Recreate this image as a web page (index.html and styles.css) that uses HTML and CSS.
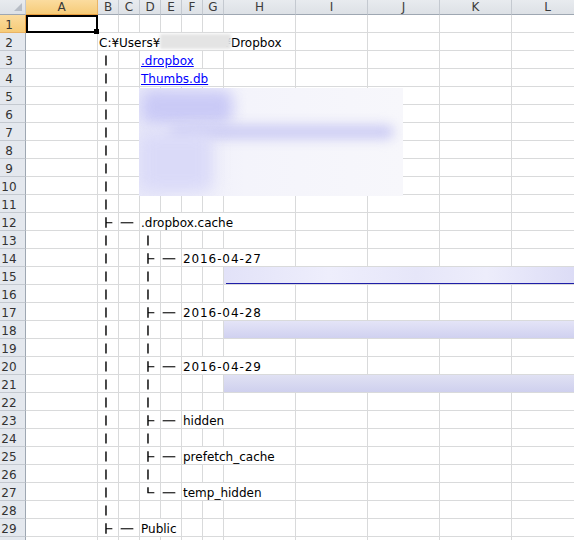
FILE: index.html
```html
<!DOCTYPE html>
<html lang="ja">
<head>
<meta charset="utf-8">
<title>Dropbox folder tree</title>
<link rel="stylesheet" href="styles.css">
</head>
<body>
<div class="sheet">
  <div class="hdr">
    <div class="corner"></div>
    <div class="sel">A</div><div>B</div><div>C</div><div>D</div><div>E</div><div>F</div><div>G</div><div>H</div><div>I</div><div>J</div><div>K</div><div>L</div>
  </div>

  <div class="row"><div class="rh sel">1</div><div></div><div></div><div></div><div></div><div></div><div></div><div></div><div></div><div></div><div></div><div></div><div></div></div>
  <div class="row"><div class="rh">2</div><div></div><div class="s7">C:¥Users¥<span class="redact"></span>¥Dropbox</div><div></div><div></div><div></div><div></div></div>
  <div class="row"><div class="rh">3</div><div></div><div class="t"><span>│</span></div><div></div><div class="s3"><a class="link" href="#">.dropbox</a></div><div></div><div></div><div></div><div></div><div></div><div></div></div>
  <div class="row"><div class="rh">4</div><div></div><div class="t"><span>│</span></div><div></div><div class="s4"><a class="link" href="#">Thumbs.db</a></div><div></div><div></div><div></div><div></div><div></div></div>
  <div class="row"><div class="rh">5</div><div></div><div class="t"><span>│</span></div><div></div><div></div><div></div><div></div><div></div><div></div><div></div><div></div><div></div><div></div></div>
  <div class="row"><div class="rh">6</div><div></div><div class="t"><span>│</span></div><div></div><div></div><div></div><div></div><div></div><div></div><div></div><div></div><div></div><div></div></div>
  <div class="row"><div class="rh">7</div><div></div><div class="t"><span>│</span></div><div></div><div></div><div></div><div></div><div></div><div></div><div></div><div></div><div></div><div></div></div>
  <div class="row"><div class="rh">8</div><div></div><div class="t"><span>│</span></div><div></div><div></div><div></div><div></div><div></div><div></div><div></div><div></div><div></div><div></div></div>
  <div class="row"><div class="rh">9</div><div></div><div class="t"><span>│</span></div><div></div><div></div><div></div><div></div><div></div><div></div><div></div><div></div><div></div><div></div></div>
  <div class="row"><div class="rh">10</div><div></div><div class="t"><span>│</span></div><div></div><div></div><div></div><div></div><div></div><div></div><div></div><div></div><div></div><div></div></div>
  <div class="row"><div class="rh">11</div><div></div><div class="t"><span>│</span></div><div></div><div></div><div></div><div></div><div></div><div></div><div></div><div></div><div></div><div></div></div>
  <div class="row"><div class="rh">12</div><div></div><div class="t"><span>├</span></div><div class="t"><span>─</span></div><div class="s5">.dropbox.cache</div><div></div><div></div><div></div><div></div></div>
  <div class="row"><div class="rh">13</div><div></div><div class="t"><span>│</span></div><div></div><div class="t"><span>│</span></div><div></div><div></div><div></div><div></div><div></div><div></div><div></div><div></div></div>
  <div class="row"><div class="rh">14</div><div></div><div class="t"><span>│</span></div><div></div><div class="t"><span>├</span></div><div class="t"><span>─</span></div><div class="s3 date">2016-04-27</div><div></div><div></div><div></div><div></div></div>
  <div class="row"><div class="rh">15</div><div></div><div class="t"><span>│</span></div><div></div><div class="t"><span>│</span></div><div></div><div></div><div></div><div></div><div></div><div></div><div></div><div></div></div>
  <div class="row"><div class="rh">16</div><div></div><div class="t"><span>│</span></div><div></div><div class="t"><span>│</span></div><div></div><div></div><div></div><div></div><div></div><div></div><div></div><div></div></div>
  <div class="row"><div class="rh">17</div><div></div><div class="t"><span>│</span></div><div></div><div class="t"><span>├</span></div><div class="t"><span>─</span></div><div class="s3 date">2016-04-28</div><div></div><div></div><div></div><div></div></div>
  <div class="row"><div class="rh">18</div><div></div><div class="t"><span>│</span></div><div></div><div class="t"><span>│</span></div><div></div><div></div><div></div><div></div><div></div><div></div><div></div><div></div></div>
  <div class="row"><div class="rh">19</div><div></div><div class="t"><span>│</span></div><div></div><div class="t"><span>│</span></div><div></div><div></div><div></div><div></div><div></div><div></div><div></div><div></div></div>
  <div class="row"><div class="rh">20</div><div></div><div class="t"><span>│</span></div><div></div><div class="t"><span>├</span></div><div class="t"><span>─</span></div><div class="s3 date">2016-04-29</div><div></div><div></div><div></div><div></div></div>
  <div class="row"><div class="rh">21</div><div></div><div class="t"><span>│</span></div><div></div><div class="t"><span>│</span></div><div></div><div></div><div></div><div></div><div></div><div></div><div></div><div></div></div>
  <div class="row"><div class="rh">22</div><div></div><div class="t"><span>│</span></div><div></div><div class="t"><span>│</span></div><div></div><div></div><div></div><div></div><div></div><div></div><div></div><div></div></div>
  <div class="row"><div class="rh">23</div><div></div><div class="t"><span>│</span></div><div></div><div class="t"><span>├</span></div><div class="t"><span>─</span></div><div class="s3">hidden</div><div></div><div></div><div></div><div></div></div>
  <div class="row"><div class="rh">24</div><div></div><div class="t"><span>│</span></div><div></div><div class="t"><span>│</span></div><div></div><div></div><div></div><div></div><div></div><div></div><div></div><div></div></div>
  <div class="row"><div class="rh">25</div><div></div><div class="t"><span>│</span></div><div></div><div class="t"><span>├</span></div><div class="t"><span>─</span></div><div class="s3">prefetch_cache</div><div></div><div></div><div></div><div></div></div>
  <div class="row"><div class="rh">26</div><div></div><div class="t"><span>│</span></div><div></div><div class="t"><span>│</span></div><div></div><div></div><div></div><div></div><div></div><div></div><div></div><div></div></div>
  <div class="row"><div class="rh">27</div><div></div><div class="t"><span>│</span></div><div></div><div class="t"><span>└</span></div><div class="t"><span>─</span></div><div class="s3">temp_hidden</div><div></div><div></div><div></div><div></div></div>
  <div class="row"><div class="rh">28</div><div></div><div class="t"><span>│</span></div><div></div><div></div><div></div><div></div><div></div><div></div><div></div><div></div><div></div><div></div></div>
  <div class="row"><div class="rh">29</div><div></div><div class="t"><span>├</span></div><div class="t"><span>─</span></div><div class="s2">Public</div><div></div><div></div><div></div><div></div><div></div><div></div><div></div></div>
  <div class="row"><div class="rh"></div><div></div><div></div><div></div><div></div><div></div><div></div><div></div><div></div><div></div><div></div><div></div><div></div></div>

  <div class="redblock">
    <div class="blob b1"></div>
    <div class="blob b2"></div>
    <div class="blob b3"></div>
  </div>
  <div class="bar bar1"><div class="uline"></div></div>
  <div class="bar bar2"></div>
  <div class="bar bar3"></div>

  <div class="selection"></div>
  <div class="handle"></div>
</div>
</body>
</html>
```

FILE: styles.css
```css
:root {
  --cols: 26px 72px repeat(6, 21px) repeat(5, 72px);
  --grid: #d9dadb;
  --hdr-line: #c4c9d0;
  --hdr-edge: #9ea7b2;
}

* { box-sizing: border-box; }

html, body {
  margin: 0;
  padding: 0;
  background: #fff;
}

body {
  width: 574px;
  height: 540px;
  overflow: hidden;
}

.sheet {
  position: relative;
  width: 574px;
  height: 540px;
  overflow: hidden;
  font-family: "DejaVu Sans", sans-serif;
  font-size: 12px;
  color: #000;
}

.hdr, .row {
  display: grid;
  grid-template-columns: var(--cols);
  width: 584px;
}

.hdr { height: 15px; }

.hdr > div {
  height: 15px;
  line-height: 14px;
  text-align: center;
  color: #3b3b3b;
  background: linear-gradient(#e8ebef, #dde1e6);
  border-right: 1px solid var(--hdr-line);
  border-bottom: 1px solid var(--hdr-edge);
}

.hdr > .sel {
  background: linear-gradient(#fbdc9f, #f6cb78);
  border-right-color: #eab465;
  border-bottom-color: #e99f3f;
}

.corner { position: relative; }

.corner::after {
  content: "";
  position: absolute;
  right: 3px;
  bottom: 3px;
  width: 8px;
  height: 8px;
  background: #b7bdc6;
  clip-path: polygon(100% 0, 100% 100%, 0 100%);
}

.row { height: 18px; }

.row > div {
  height: 18px;
  border-right: 1px solid var(--grid);
  border-bottom: 1px solid var(--grid);
  padding: 4px 0 0 1px;
  line-height: 13px;
  white-space: nowrap;
}

.row > .rh {
  background: #e4e8ee;
  border-right-color: var(--hdr-edge);
  border-bottom-color: var(--hdr-line);
  text-align: center;
  padding-right: 8px;
  color: #333;
}

.row > .rh.sel {
  background: linear-gradient(#fbdc9f, #f6cb78);
  border-right-color: #e99f3f;
  border-bottom-color: #eab465;
}

/* tree connectors (box-drawing characters) */
.row > .t {
  font-family: "Noto Sans CJK JP", "DejaVu Sans", sans-serif;
  color: #000;
  -webkit-text-stroke: 0.8px #000;
  line-height: 14px;
  padding: 2px 0 0 2px;
}

.t > span {
  display: inline-block;
  transform: scaleY(0.78);
}

.s2 { grid-column: span 2; }
.s3 { grid-column: span 3; }
.s4 { grid-column: span 4; }
.s5 { grid-column: span 5; }
.s7 { grid-column: span 7; }

.link {
  color: #0000ff;
  text-decoration: underline;
}

.date { letter-spacing: 0.9px; }

.redact {
  display: inline-block;
  position: relative;
  width: 71px;
  height: 15px;
  margin: -3px -8px 0 0;
  vertical-align: -2px;
  background: #e4e4e4;
  filter: blur(1.5px);
}

/* blurred (redacted) file list */
.redblock {
  position: absolute;
  left: 139px;
  top: 88px;
  width: 264px;
  height: 108px;
  background: linear-gradient(90deg, #e9e9f9, #f4f4fb 40%, #f7f7fb);
  overflow: hidden;
}

.blob {
  position: absolute;
  border-radius: 10px;
}

.b1 { left: 2px; top: 2px; width: 92px; height: 34px; background: #cacaf6; filter: blur(7px); }
.b2 { left: 30px; top: 37px; width: 225px; height: 14px; background: #cbcbf4; filter: blur(6px); }
.b3 { left: 0; top: 44px; width: 74px; height: 60px; background: #dadaf8; filter: blur(8px); }

.bar {
  position: absolute;
  left: 224px;
  width: 350px;
  height: 17px;
}

.bar1 {
  top: 267px;
  background: linear-gradient(90deg, #e2e2f8, #eeeefc 30%, #e6e6f9 55%, #ededfb 75%, #dcdcf6);
}

.uline {
  position: absolute;
  left: 2px;
  right: 0;
  bottom: 0;
  height: 1px;
  background: #1e1ea8;
}

.bar2 {
  top: 321px;
  background: linear-gradient(#e4e4f7, #d0d1f0);
}

.bar3 {
  top: 375px;
  background: linear-gradient(#e0e1f3, #cfd0ee);
}

.selection {
  position: absolute;
  left: 26px;
  top: 15px;
  width: 72px;
  height: 18px;
  border: 2px solid #000;
}

.handle {
  position: absolute;
  left: 94px;
  top: 29px;
  width: 5px;
  height: 5px;
  background: #000;
}
```
